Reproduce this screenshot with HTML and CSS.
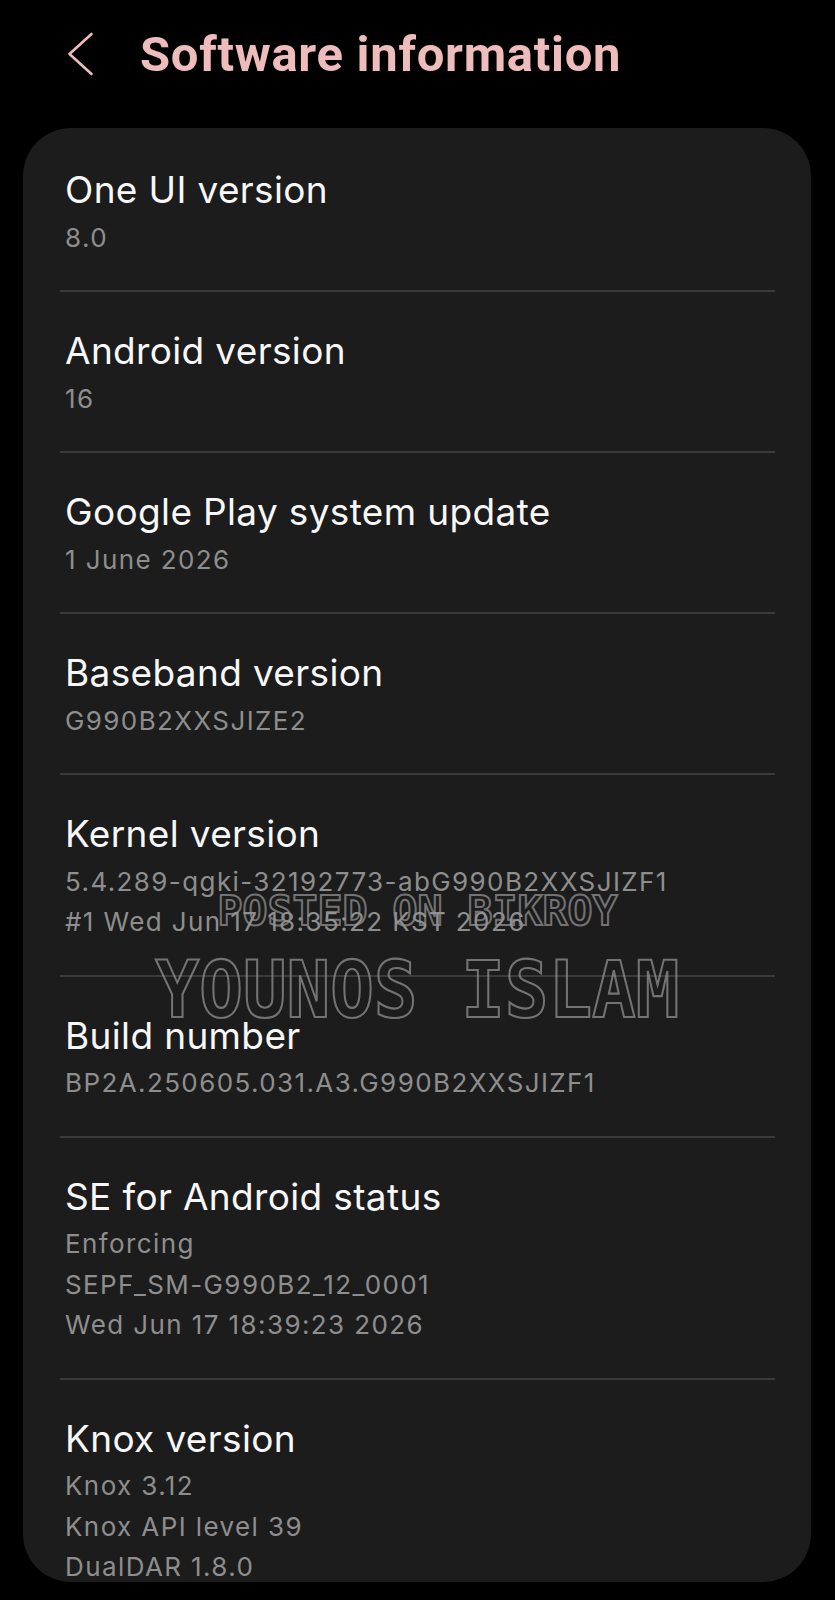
FILE: index.html
```html
<!DOCTYPE html>
<html lang="en">
<head>
<meta charset="utf-8">
<title>Software information</title>
<link rel="stylesheet" href="styles.css">
</head>
<body>
<div class="screen">
  <header class="appbar">
    <svg class="back" width="30" height="46" viewBox="0 0 30 46" aria-hidden="true">
      <path d="M25.5 3 L3.5 23 L25.5 43" fill="none" stroke="#efbcbc" stroke-width="2.6" stroke-linecap="round" stroke-linejoin="round"/>
    </svg>
    <h1 class="title">Software information</h1>
  </header>

  <section class="card">
    <div class="item">
      <div class="item-title">One UI version</div>
      <div class="item-sub"><div>8.0</div></div>
    </div>
    <div class="item">
      <div class="item-title">Android version</div>
      <div class="item-sub"><div>16</div></div>
    </div>
    <div class="item">
      <div class="item-title">Google Play system update</div>
      <div class="item-sub"><div>1 June 2026</div></div>
    </div>
    <div class="item">
      <div class="item-title">Baseband version</div>
      <div class="item-sub"><div>G990B2XXSJIZE2</div></div>
    </div>
    <div class="item">
      <div class="item-title">Kernel version</div>
      <div class="item-sub">
        <div>5.4.289-qgki-32192773-abG990B2XXSJIZF1</div>
        <div>#1 Wed Jun 17 18:35:22 KST 2026</div>
      </div>
    </div>
    <div class="item">
      <div class="item-title">Build number</div>
      <div class="item-sub"><div>BP2A.250605.031.A3.G990B2XXSJIZF1</div></div>
    </div>
    <div class="item">
      <div class="item-title">SE for Android status</div>
      <div class="item-sub">
        <div>Enforcing</div>
        <div>SEPF_SM-G990B2_12_0001</div>
        <div>Wed Jun 17 18:39:23 2026</div>
      </div>
    </div>
    <div class="item">
      <div class="item-title">Knox version</div>
      <div class="item-sub">
        <div>Knox 3.12</div>
        <div>Knox API level 39</div>
        <div>DualDAR 1.8.0</div>
      </div>
    </div>
  </section>

  <div class="watermark wm-small">POSTED ON BIKROY</div>
  <div class="watermark wm-large">YOUNOS ISLAM</div>
</div>
</body>
</html>
```

FILE: styles.css
```css
html, body {
  margin: 0;
  padding: 0;
  background: #000;
}

.screen {
  position: relative;
  width: 835px;
  height: 1600px;
  overflow: hidden;
  background: #000;
  font-family: Inter, Roboto, "Noto Sans", sans-serif;
}

.appbar {
  display: flex;
  align-items: center;
  height: 108px;
  padding-left: 66px;
}

.back {
  display: block;
  flex: none;
}

.title {
  margin: 0 0 0 44px;
  font-family: Roboto, "Noto Sans", sans-serif;
  font-size: 49px;
  line-height: 1;
  font-weight: 700;
  color: #efbcbc;
  letter-spacing: 0.7px;
}

.card {
  margin: 20px 24px 0 23px;
  height: 1454px;
  box-sizing: border-box;
  padding: 3px 36px 0 37px;
  background: #1c1c1c;
  border-radius: 48px;
  overflow: hidden;
}

.item {
  padding: 37px 0 32px 5px;
}

.item + .item {
  border-top: 2px solid #3a3a3a;
}

.item-title {
  font-size: 37px;
  line-height: 44px;
  letter-spacing: 0.35px;
  color: #f7f7f7;
  white-space: nowrap;
}

.item-sub {
  margin-top: 5.5px;
  font-size: 26px;
  line-height: 40.5px;
  letter-spacing: 1.4px;
  color: #8e8e8e;
  white-space: nowrap;
}

.watermark {
  position: absolute;
  left: 0;
  right: 0;
  text-align: center;
  font-family: "DejaVu Sans Mono", monospace;
  font-weight: 700;
  line-height: 1;
  color: transparent;
  -webkit-text-stroke: 2px rgba(150, 150, 150, 0.72);
  white-space: nowrap;
  pointer-events: none;
}

.wm-small {
  top: 890px;
  font-size: 41.5px;
}

.wm-large {
  top: 951px;
  font-size: 72.5px;
  transform: scaleY(1.08);
  transform-origin: top center;
}
```
